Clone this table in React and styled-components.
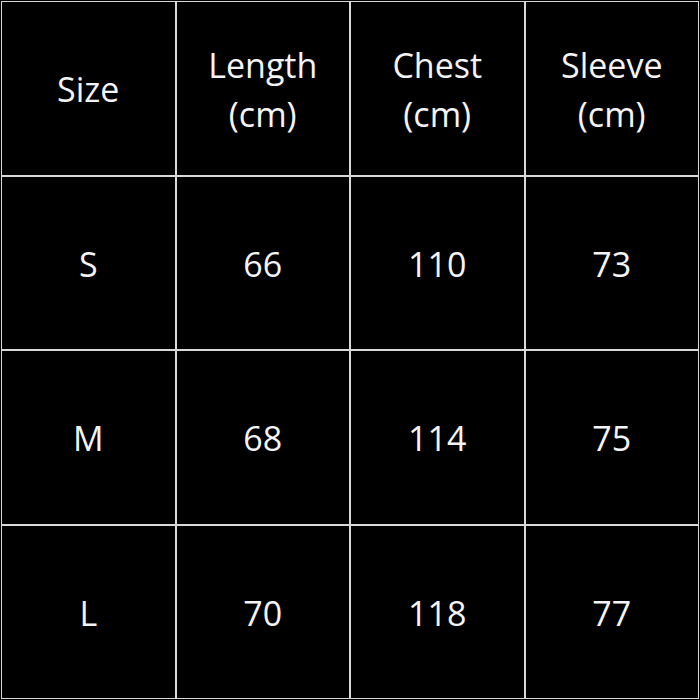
import React from "react";
import styled, { createGlobalStyle } from "styled-components";

const GlobalStyle = createGlobalStyle`
  html, body {
    margin: 0;
    padding: 0;
    background: #000;
  }
`;

const headers = ["Size", "Length\n(cm)", "Chest\n(cm)", "Sleeve\n(cm)"];

const rows = [
  ["S", "66", "110", "73"],
  ["M", "68", "114", "75"],
  ["L", "70", "118", "77"],
];

export default function App() {
  return (
    <>
      <GlobalStyle />
      <Page>
        <Table>
          {headers.map((h) => (
            <Cell key={h}>{h}</Cell>
          ))}
          {rows.map((row) =>
            row.map((value, i) => <Cell key={row[0] + i}>{value}</Cell>)
          )}
        </Table>
      </Page>
    </>
  );
}

const Page = styled.div`
  width: 700px;
  height: 700px;
  padding: 1px;
  box-sizing: border-box;
  background: #000;
`;

const Table = styled.div`
  display: grid;
  grid-template-columns: repeat(4, 1fr);
  grid-template-rows: repeat(4, 1fr);
  gap: 2px;
  padding: 1px;
  width: 100%;
  height: 100%;
  box-sizing: border-box;
  background: #d9d9d9;
`;

const Cell = styled.div`
  display: flex;
  align-items: center;
  justify-content: center;
  padding-top: 3px;
  box-sizing: border-box;
  background: #000;
  color: #f4f4f4;
  font-family: "Open Sans", "Noto Sans", sans-serif;
  font-size: 34px;
  line-height: 49px;
  text-align: center;
  white-space: pre-line;
`;
